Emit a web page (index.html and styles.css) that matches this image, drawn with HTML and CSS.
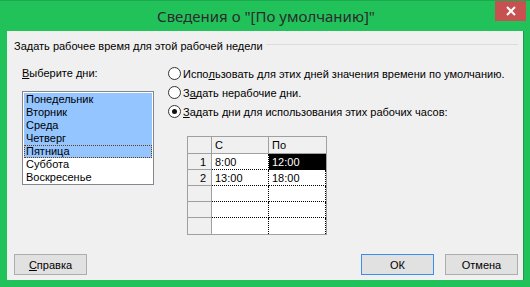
FILE: index.html
```html
<!DOCTYPE html>
<html lang="ru">
<head>
    <meta charset="UTF-8">
    <title>Сведения о "[По умолчанию]"</title>
    <link rel="stylesheet" href="styles.css">
</head>
<body>
    <div class="window">
        <div class="titlebar">
            <span class="title">Сведения о "[По умолчанию]"</span>
            <button class="close" aria-label="Закрыть">
                <svg width="10" height="10" viewBox="0 0 10 10">
                    <path d="M1 1 L9 9 M9 1 L1 9" stroke="#fff" stroke-width="2" fill="none"/>
                </svg>
            </button>
        </div>

        <div class="client">
            <div class="group-title">
                <span>Задать рабочее время для этой рабочей недели</span>
                <span class="group-line"></span>
            </div>

            <div class="content">
                <div class="days">
                    <div class="days-label"><u>В</u>ыберите дни:</div>
                    <ul class="listbox">
                        <li class="selected">Понедельник</li>
                        <li class="selected">Вторник</li>
                        <li class="selected">Среда</li>
                        <li class="selected">Четверг</li>
                        <li class="selected focused">Пятница</li>
                        <li>Суббота</li>
                        <li>Воскресенье</li>
                    </ul>
                </div>

                <div class="options">
                    <label class="radio"><span class="dot"></span>Испо<u>л</u>ьзовать для этих дней значения времени по умолчанию.</label>
                    <label class="radio"><span class="dot"></span>З<u>а</u>дать нерабочие дни.</label>
                    <label class="radio"><span class="dot checked"></span><u>З</u>адать дни для использования этих рабочих часов:</label>

                    <table class="hours">
                        <tr>
                            <th class="corner"></th>
                            <th>С</th>
                            <th class="last">По</th>
                        </tr>
                        <tr>
                            <td class="num">1</td>
                            <td class="cell">8:00</td>
                            <td class="cell last active">12:00</td>
                        </tr>
                        <tr>
                            <td class="num">2</td>
                            <td class="cell">13:00</td>
                            <td class="cell last">18:00</td>
                        </tr>
                        <tr>
                            <td class="num"></td>
                            <td class="cell"></td>
                            <td class="cell last"></td>
                        </tr>
                        <tr>
                            <td class="num"></td>
                            <td class="cell"></td>
                            <td class="cell last"></td>
                        </tr>
                        <tr class="end">
                            <td class="num"></td>
                            <td class="cell"></td>
                            <td class="cell last"></td>
                        </tr>
                    </table>
                </div>
            </div>

            <div class="buttons">
                <button class="btn"><u>С</u>правка</button>
                <span class="spacer"></span>
                <button class="btn default">ОК</button>
                <button class="btn">Отмена</button>
            </div>
        </div>
    </div>
</body>
</html>
```

FILE: styles.css
```css
html, body {
    margin: 0;
    padding: 0;
}
body {
    width: 530px;
    height: 287px;
    overflow: hidden;
    background: #22c25b;
    font-family: "Liberation Sans", Arial, sans-serif;
    font-size: 11px;
    color: #000;
}
.window {
    display: flex;
    flex-direction: column;
    height: 287px;
    border-top: 1px solid #1ca84e;
    box-sizing: border-box;
}
.titlebar {
    height: 30px;
    display: flex;
    justify-content: center;
    align-items: center;
    position: relative;
}
.title {
    font-family: "Noto Sans", "Open Sans", sans-serif;
    font-size: 15px;
    color: #2b2b2b;
    margin-top: -1px;
    margin-left: 2px;
}
.close {
    position: absolute;
    top: 0;
    right: 4px;
    width: 31px;
    height: 20px;
    border: none;
    padding: 0;
    background: #c75050;
    display: flex;
    align-items: center;
    justify-content: center;
}
.client {
    margin: 0 6px 0 7px;
    height: 249px;
    background: #f0f0f0;
    border-right: 1px solid #1a9e4a;
    box-sizing: border-box;
    padding: 8px 5px 5px 7px;
    display: flex;
    flex-direction: column;
}
.group-title {
    display: flex;
    align-items: center;
    height: 13px;
    white-space: nowrap;
}
.group-line {
    flex: 1;
    border-top: 1px solid #dcdcdc;
    margin-left: 3px;
    margin-top: -2px;
}
.content {
    display: flex;
    margin-top: 15px;
}
.days {
    margin-left: 8px;
    width: 132px;
}
.days-label {
    height: 13px;
    line-height: 13px;
}
.listbox {
    list-style: none;
    margin: 11px 0 0;
    padding: 1px;
    border: 1px solid #828790;
    background: #fff;
    box-sizing: border-box;
    height: 94px;
}
.listbox li {
    height: 13px;
    line-height: 13px;
    padding-left: 2px;
    box-sizing: border-box;
}
.listbox li.selected {
    background: #94c5ff;
}
.listbox li.focused {
    outline: 1px dotted #6b3d0f;
    outline-offset: -1px;
}
.options {
    margin-left: 14px;
    margin-top: -3px;
}
.radio {
    display: flex;
    align-items: center;
    height: 19px;
    white-space: nowrap;
}
.dot {
    width: 11px;
    height: 11px;
    border: 1px solid #333;
    border-radius: 50%;
    background: #fff;
    margin-right: 2px;
    position: relative;
    flex: none;
}
.dot.checked::after {
    content: "";
    position: absolute;
    left: 3px;
    top: 3px;
    width: 5px;
    height: 5px;
    border-radius: 50%;
    background: #111;
}
.hours {
    margin: 15px 0 0 19px;
    border-collapse: separate;
    border-spacing: 0;
    border: 1px solid #a0a0a0;
    background: #fff;
    table-layout: fixed;
}
.hours th, .hours td {
    padding: 0 0 0 3px;
    font-weight: normal;
    text-align: left;
    box-sizing: border-box;
    white-space: nowrap;
}
.hours th {
    height: 17px;
    background: #f0f0f0;
    border-right: 1px solid #a0a0a0;
    border-bottom: 1px solid #a0a0a0;
    width: 57px;
}
.hours th.corner {
    width: 24px;
}
.hours th.last, .hours td.last {
    border-right: none;
    width: 57px;
}
.hours td {
    height: 16px;
}
.hours td.num {
    background: #f0f0f0;
    border-right: 1px solid #a0a0a0;
    border-bottom: 1px solid #a0a0a0;
    text-align: right;
    padding: 0 5px 0 0;
}
.hours td.cell {
    border-right: 1px dotted #000;
    border-bottom: 1px dotted #000;
}
.hours tr.end td {
    border-bottom: none;
}
.hours td.active {
    background: #000;
    color: #fff;
}
.buttons {
    display: flex;
    margin-top: auto;
    gap: 11px;
}
.spacer {
    flex: 1;
}
.btn {
    width: 73px;
    height: 21px;
    border: 1px solid #adadad;
    background: #e1e1e1;
    font-family: "Liberation Sans", Arial, sans-serif;
    font-size: 11px;
    color: #000;
    padding: 0;
}
.btn.default {
    border-color: #3c8df0;
}
```
